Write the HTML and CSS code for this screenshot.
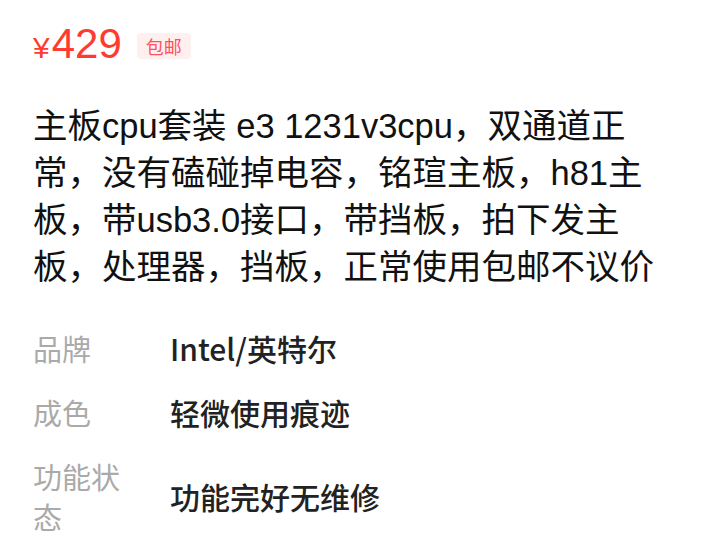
FILE: index.html
```html
<!DOCTYPE html>
<html lang="zh-CN">
<head>
    <meta charset="UTF-8">
    <meta name="viewport" content="width=device-width, initial-scale=1.0">
    <title>商品详情</title>
    <link rel="stylesheet" href="styles.css">
</head>
<body>

    <div class="item">
        <div class="price-row">
            <span class="price"><span class="yen">¥</span>429</span>
            <span class="tag">包邮</span>
        </div>

        <p class="desc">主板cpu套装 e3 1231v3cpu，双通道正常，没有磕碰掉电容，铭瑄主板，h81主板，带usb3.0接口，带挡板，拍下发主板，处理器，挡板，正常使用包邮不议价</p>

        <div class="attrs">
            <div class="attr">
                <span class="label">品牌</span>
                <span class="value">Intel/英特尔</span>
            </div>
            <div class="attr">
                <span class="label">成色</span>
                <span class="value">轻微使用痕迹</span>
            </div>
            <div class="attr">
                <span class="label">功能状态</span>
                <span class="value">功能完好无维修</span>
            </div>
        </div>
    </div>

</body>
</html>
```

FILE: styles.css
```css
body {
    margin: 0;
    background: #fff;
    font-family: "Liberation Sans", "Noto Sans CJK SC", sans-serif;
    color: #111;
}
.item {
    padding: 23px 33px 0 33px;
}
.price-row {
    display: flex;
    align-items: center;
    gap: 15px;
    height: 46px;
}
.price {
    color: #ff3b2f;
    font-size: 42px;
    line-height: 46px;
}
.yen {
    font-size: 30px;
    margin-right: 2px;
}
.tag {
    background: #fff0f0;
    color: #ff5060;
    font-family: "Noto Sans CJK SC", sans-serif;
    font-size: 18px;
    line-height: 26px;
    padding: 0 9px;
    border-radius: 4px;
}
.desc {
    margin: 34px 0 0 0;
    max-width: 624px;
    font-size: 34.5px;
    line-height: 47px;
}
.attrs {
    margin-top: 25px;
}
.attr {
    display: flex;
    align-items: center;
    padding: 12px 0;
}
.label {
    flex: 0 0 100px;
    margin-right: 37px;
    color: #aaa;
    font-family: "Noto Sans CJK SC", sans-serif;
    font-size: 29px;
    line-height: 40px;
}
.value {
    color: #222;
    font-family: "Noto Sans CJK SC", sans-serif;
    font-weight: 500;
    font-size: 30px;
    line-height: 40px;
}
```
